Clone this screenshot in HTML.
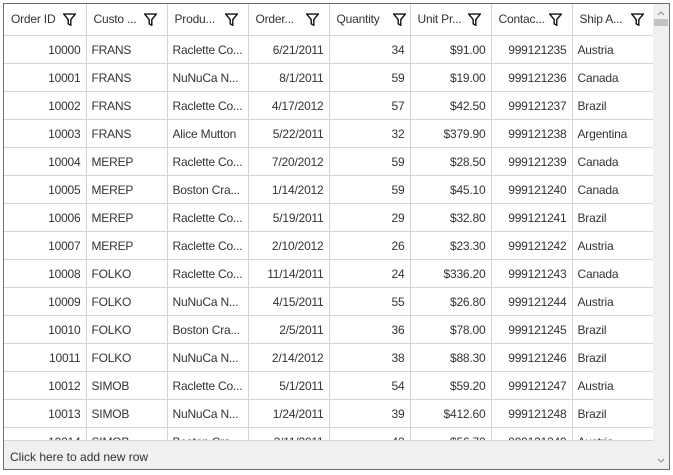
<!DOCTYPE html>
<html><head><meta charset="utf-8"><style>
*{margin:0;padding:0;box-sizing:border-box}
body{width:673px;height:475px;background:#fff;font-family:"Segoe UI","Liberation Sans",sans-serif;font-size:12px;color:#333;position:relative;overflow:hidden}
#grid{position:absolute;left:3px;top:3px;width:667px;height:467px;border:1px solid #6e6e6e;overflow:hidden;background:#fff}
table{position:absolute;left:0;top:0;border-collapse:collapse;table-layout:fixed;width:650px}
td,th{border-right:1px solid #d4d4d4;border-bottom:1px solid #d4d4d4;height:28px;padding:2px 5px 0;white-space:nowrap;overflow:hidden;font-weight:normal;letter-spacing:-0.2px}
th{height:31px;text-align:left;position:relative;color:#333;padding-left:7px;padding-top:0}
th svg{position:absolute;right:10px;top:9px}
.r{text-align:right}
#sb{position:absolute;right:0;top:0;width:16px;height:465px;background:#f0f0f0}
#add{position:absolute;left:0;top:436px;width:650px;height:29px;background:#f0f0f0;border-top:1px solid #d4d4d4;padding:9px 0 0 6px;color:#333}
</style></head><body>
<div id="grid">
<table>
<colgroup><col style="width:82px"><col style="width:81px"><col style="width:81px"><col style="width:81px"><col style="width:81px"><col style="width:81px"><col style="width:81px"><col style="width:82px"></colgroup>
<tr>
<th>Order ID<svg width="13" height="13" viewBox="0 0 12 12"><path d="M0.6 1h10.8L7.2 6v5.3L4.8 10V6z" fill="none" stroke="#111" stroke-width="1.3"/></svg></th>
<th>Custo ...<svg width="13" height="13" viewBox="0 0 12 12"><path d="M0.6 1h10.8L7.2 6v5.3L4.8 10V6z" fill="none" stroke="#111" stroke-width="1.3"/></svg></th>
<th>Produ...<svg width="13" height="13" viewBox="0 0 12 12"><path d="M0.6 1h10.8L7.2 6v5.3L4.8 10V6z" fill="none" stroke="#111" stroke-width="1.3"/></svg></th>
<th>Order...<svg width="13" height="13" viewBox="0 0 12 12"><path d="M0.6 1h10.8L7.2 6v5.3L4.8 10V6z" fill="none" stroke="#111" stroke-width="1.3"/></svg></th>
<th>Quantity<svg width="13" height="13" viewBox="0 0 12 12" style="right:4px"><path d="M0.6 1h10.8L7.2 6v5.3L4.8 10V6z" fill="none" stroke="#111" stroke-width="1.3"/></svg></th>
<th>Unit Pr...<svg width="13" height="13" viewBox="0 0 12 12"><path d="M0.6 1h10.8L7.2 6v5.3L4.8 10V6z" fill="none" stroke="#111" stroke-width="1.3"/></svg></th>
<th>Contac...<svg width="13" height="13" viewBox="0 0 12 12"><path d="M0.6 1h10.8L7.2 6v5.3L4.8 10V6z" fill="none" stroke="#111" stroke-width="1.3"/></svg></th>
<th>Ship A...<svg width="13" height="13" viewBox="0 0 12 12"><path d="M0.6 1h10.8L7.2 6v5.3L4.8 10V6z" fill="none" stroke="#111" stroke-width="1.3"/></svg></th>
</tr>
<tr><td class="r">10000</td><td>FRANS</td><td>Raclette Co...</td><td class="r">6/21/2011</td><td class="r">34</td><td class="r">$91.00</td><td class="r">999121235</td><td>Austria</td></tr>
<tr><td class="r">10001</td><td>FRANS</td><td>NuNuCa N...</td><td class="r">8/1/2011</td><td class="r">59</td><td class="r">$19.00</td><td class="r">999121236</td><td>Canada</td></tr>
<tr><td class="r">10002</td><td>FRANS</td><td>Raclette Co...</td><td class="r">4/17/2012</td><td class="r">57</td><td class="r">$42.50</td><td class="r">999121237</td><td>Brazil</td></tr>
<tr><td class="r">10003</td><td>FRANS</td><td>Alice Mutton</td><td class="r">5/22/2011</td><td class="r">32</td><td class="r">$379.90</td><td class="r">999121238</td><td>Argentina</td></tr>
<tr><td class="r">10004</td><td>MEREP</td><td>Raclette Co...</td><td class="r">7/20/2012</td><td class="r">59</td><td class="r">$28.50</td><td class="r">999121239</td><td>Canada</td></tr>
<tr><td class="r">10005</td><td>MEREP</td><td>Boston Cra...</td><td class="r">1/14/2012</td><td class="r">59</td><td class="r">$45.10</td><td class="r">999121240</td><td>Canada</td></tr>
<tr><td class="r">10006</td><td>MEREP</td><td>Raclette Co...</td><td class="r">5/19/2011</td><td class="r">29</td><td class="r">$32.80</td><td class="r">999121241</td><td>Brazil</td></tr>
<tr><td class="r">10007</td><td>MEREP</td><td>Raclette Co...</td><td class="r">2/10/2012</td><td class="r">26</td><td class="r">$23.30</td><td class="r">999121242</td><td>Austria</td></tr>
<tr><td class="r">10008</td><td>FOLKO</td><td>Raclette Co...</td><td class="r">11/14/2011</td><td class="r">24</td><td class="r">$336.20</td><td class="r">999121243</td><td>Canada</td></tr>
<tr><td class="r">10009</td><td>FOLKO</td><td>NuNuCa N...</td><td class="r">4/15/2011</td><td class="r">55</td><td class="r">$26.80</td><td class="r">999121244</td><td>Austria</td></tr>
<tr><td class="r">10010</td><td>FOLKO</td><td>Boston Cra...</td><td class="r">2/5/2011</td><td class="r">36</td><td class="r">$78.00</td><td class="r">999121245</td><td>Brazil</td></tr>
<tr><td class="r">10011</td><td>FOLKO</td><td>NuNuCa N...</td><td class="r">2/14/2012</td><td class="r">38</td><td class="r">$88.30</td><td class="r">999121246</td><td>Brazil</td></tr>
<tr><td class="r">10012</td><td>SIMOB</td><td>Raclette Co...</td><td class="r">5/1/2011</td><td class="r">54</td><td class="r">$59.20</td><td class="r">999121247</td><td>Austria</td></tr>
<tr><td class="r">10013</td><td>SIMOB</td><td>NuNuCa N...</td><td class="r">1/24/2011</td><td class="r">39</td><td class="r">$412.60</td><td class="r">999121248</td><td>Brazil</td></tr>
<tr><td class="r">10014</td><td>SIMOB</td><td>Boston Cra...</td><td class="r">2/11/2011</td><td class="r">42</td><td class="r">$56.70</td><td class="r">999121249</td><td>Austria</td></tr>
</table>
<div id="add">Click here to add new row</div>
<div id="sb">
<svg width="16" height="12" style="position:absolute;top:4px;left:0"><path d="M5 7l3-3 3 3" fill="none" stroke="#888" stroke-width="1"/></svg>
<div style="position:absolute;top:15px;left:1px;width:14px;height:7px;background:#c2c2c2"></div>
<svg width="16" height="12" style="position:absolute;bottom:2px;left:0"><path d="M5 4l3 3 3-3" fill="none" stroke="#888" stroke-width="1"/></svg>
</div>
</div>
</body></html>
